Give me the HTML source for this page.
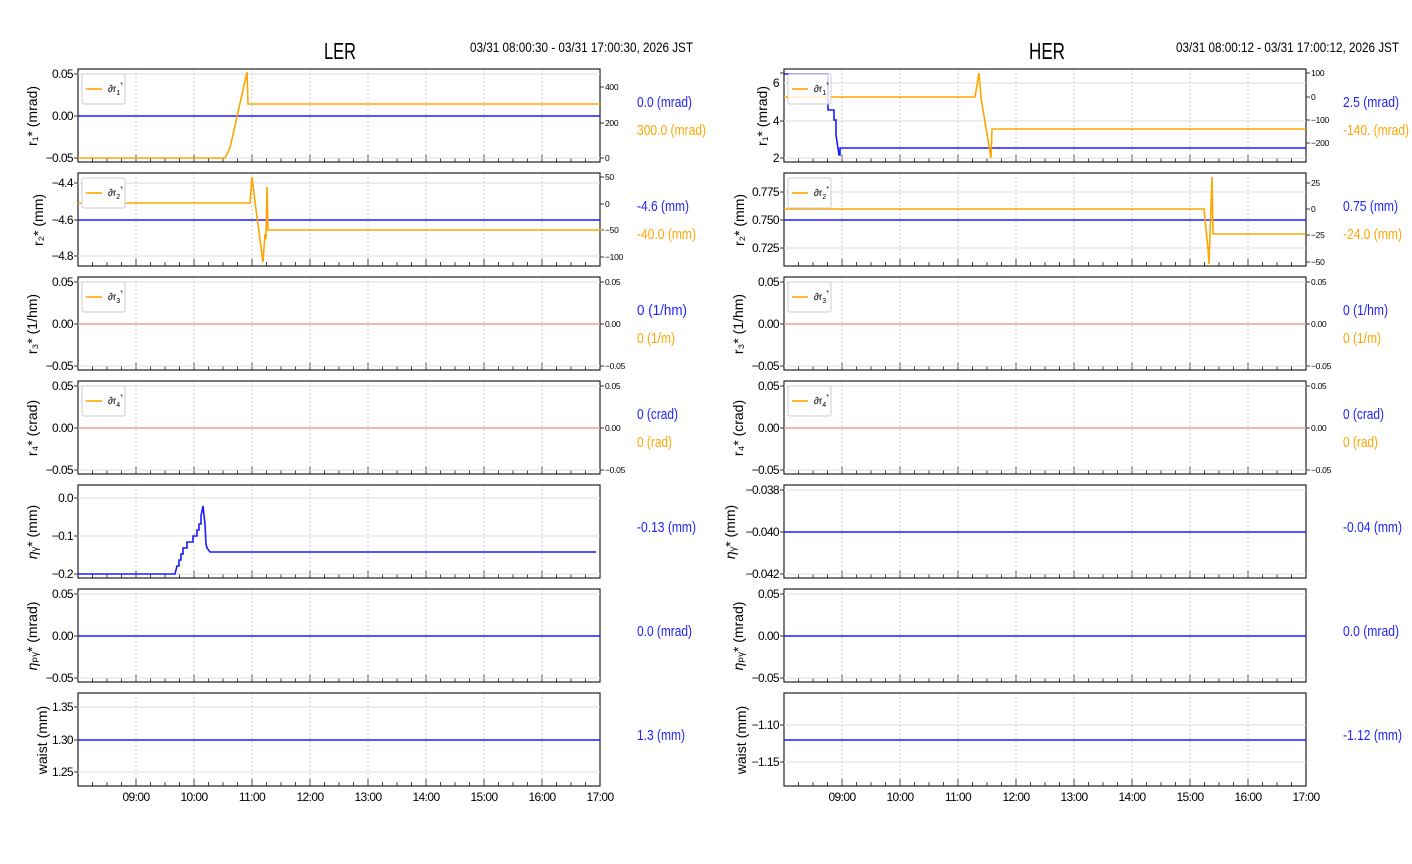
<!DOCTYPE html><html><head><meta charset="utf-8"><style>body{margin:0;background:#fff}svg{display:block}text{font-family:"Liberation Sans",sans-serif}</style></head><body>
<svg width="1412" height="864" viewBox="0 0 1412 864" xmlns="http://www.w3.org/2000/svg">
<defs>
<g id="fr">
<g stroke="#ccc" stroke-dasharray="2,2" stroke-width="1">
<line x1="58" y1="0" x2="58" y2="93"/><line x1="116" y1="0" x2="116" y2="93"/><line x1="174" y1="0" x2="174" y2="93"/><line x1="232" y1="0" x2="232" y2="93"/><line x1="290" y1="0" x2="290" y2="93"/><line x1="348" y1="0" x2="348" y2="93"/><line x1="406" y1="0" x2="406" y2="93"/><line x1="464" y1="0" x2="464" y2="93"/></g>
<path stroke="#444" stroke-width="1" d="M14.5 93v-4M29 93v-4M43.5 93v-4M72.5 93v-4M87 93v-4M101.5 93v-4M130.5 93v-4M145 93v-4M159.5 93v-4M188.5 93v-4M203 93v-4M217.5 93v-4M246.5 93v-4M261 93v-4M275.5 93v-4M304.5 93v-4M319 93v-4M333.5 93v-4M362.5 93v-4M377 93v-4M391.5 93v-4M420.5 93v-4M435 93v-4M449.5 93v-4M478.5 93v-4M493 93v-4M507.5 93v-4M58 93v-7M116 93v-7M174 93v-7M232 93v-7M290 93v-7M348 93v-7M406 93v-7M464 93v-7"/>
<rect x="0" y="0" width="522" height="93" fill="none" stroke="#222" stroke-width="1.2"/>
</g>
</defs>
<text x="340" y="59" font-size="23" text-anchor="middle" textLength="32" lengthAdjust="spacingAndGlyphs">LER</text>
<text x="470" y="52" font-size="14" textLength="223" lengthAdjust="spacingAndGlyphs">03/31 08:00:30 - 03/31 17:00:30, 2026 JST</text>
<text x="1047" y="59" font-size="23" text-anchor="middle" textLength="36" lengthAdjust="spacingAndGlyphs">HER</text>
<text x="1176" y="52" font-size="14" textLength="223" lengthAdjust="spacingAndGlyphs">03/31 08:00:12 - 03/31 17:00:12, 2026 JST</text>

<g font-size="12" letter-spacing="-0.6">
<use href="#fr" x="78" y="69"/><use href="#fr" x="78" y="173"/><use href="#fr" x="78" y="277"/><use href="#fr" x="78" y="381"/><use href="#fr" x="78" y="485"/><use href="#fr" x="78" y="589"/><use href="#fr" x="78" y="693"/>
<use href="#fr" x="784" y="69"/><use href="#fr" x="784" y="173"/><use href="#fr" x="784" y="277"/><use href="#fr" x="784" y="381"/><use href="#fr" x="784" y="485"/><use href="#fr" x="784" y="589"/><use href="#fr" x="784" y="693"/>

<g stroke="#ddd" stroke-width="1">
<path d="M78 74h522M78 158h522M78 183h522M78 256h522M78 282h522M78 366h522M78 386h522M78 470h522M78 498h522M78 536h522M78 574h522M78 594h522M78 678h522M78 707h522M78 772h522"/>
<path d="M784 83h522M784 121h522M784 158h522M784 192h522M784 248h522M784 282h522M784 366h522M784 386h522M784 470h522M784 490h522M784 574h522M784 594h522M784 678h522M784 725h522M784 762h522"/>
</g>
<path stroke="#333" d="M74 74h4M74 116h4M74 158h4M74 183h4M74 220h4M74 256h4M74 282h4M74 324h4M74 366h4M74 386h4M74 428h4M74 470h4M74 498h4M74 536h4M74 574h4M74 594h4M74 636h4M74 678h4M74 707h4M74 740h4M74 772h4M780 73h4M780 121h4M780 158h4M780 192h4M780 220h4M780 248h4M780 282h4M780 324h4M780 366h4M780 386h4M780 428h4M780 470h4M780 490h4M780 532h4M780 574h4M780 594h4M780 636h4M780 678h4M780 725h4M780 762h4M600 87h4M600 123h4M600 158h4M600 177h4M600 204h4M600 230h4M600 257h4M600 282h4M600 324h4M600 366h4M600 386h4M600 428h4M600 470h4M1306 73h4M1306 97h4M1306 120h4M1306 143h4M1306 183h4M1306 209h4M1306 235h4M1306 262h4M1306 282h4M1306 324h4M1306 366h4M1306 386h4M1306 428h4M1306 470h4"/>

<g text-anchor="end">
<text x="73" y="78">0.05</text><text x="73" y="120">0.00</text><text x="73" y="162">−0.05</text>
<text x="73" y="187">−4.4</text><text x="73" y="224">−4.6</text><text x="73" y="260">−4.8</text>
<text x="73" y="286">0.05</text><text x="73" y="328">0.00</text><text x="73" y="370">−0.05</text>
<text x="73" y="390">0.05</text><text x="73" y="432">0.00</text><text x="73" y="474">−0.05</text>
<text x="73" y="502">0.0</text><text x="73" y="540">−0.1</text><text x="73" y="578">−0.2</text>
<text x="73" y="598">0.05</text><text x="73" y="640">0.00</text><text x="73" y="682">−0.05</text>
<text x="73" y="711">1.35</text><text x="73" y="744">1.30</text><text x="73" y="776">1.25</text>
<text x="779" y="87">6</text><text x="779" y="125">4</text><text x="779" y="162">2</text>
<text x="779" y="196">0.775</text><text x="779" y="224">0.750</text><text x="779" y="252">0.725</text>
<text x="779" y="286">0.05</text><text x="779" y="328">0.00</text><text x="779" y="370">−0.05</text>
<text x="779" y="390">0.05</text><text x="779" y="432">0.00</text><text x="779" y="474">−0.05</text>
<text x="779" y="494">−0.038</text><text x="779" y="536">−0.040</text><text x="779" y="578">−0.042</text>
<text x="779" y="598">0.05</text><text x="779" y="640">0.00</text><text x="779" y="682">−0.05</text>
<text x="779" y="729">−1.10</text><text x="779" y="766">−1.15</text>
</g>
<g font-size="8.5" letter-spacing="-0.3">
<text x="605" y="90">400</text><text x="605" y="126">200</text><text x="605" y="161">0</text>
<text x="605" y="180">50</text><text x="605" y="207">0</text><text x="605" y="233">−50</text><text x="605" y="260">−100</text>
<text x="605" y="285">0.05</text><text x="605" y="327">0.00</text><text x="605" y="369">−0.05</text>
<text x="605" y="389">0.05</text><text x="605" y="431">0.00</text><text x="605" y="473">−0.05</text>
<text x="1311" y="76">100</text><text x="1311" y="100">0</text><text x="1311" y="123">−100</text><text x="1311" y="146">−200</text>
<text x="1311" y="186">25</text><text x="1311" y="212">0</text><text x="1311" y="238">−25</text><text x="1311" y="265">−50</text>
<text x="1311" y="285">0.05</text><text x="1311" y="327">0.00</text><text x="1311" y="369">−0.05</text>
<text x="1311" y="389">0.05</text><text x="1311" y="431">0.00</text><text x="1311" y="473">−0.05</text>
</g>
<g text-anchor="middle">
<text x="136" y="801">09:00</text><text x="194" y="801">10:00</text><text x="252" y="801">11:00</text><text x="310" y="801">12:00</text><text x="368" y="801">13:00</text><text x="426" y="801">14:00</text><text x="484" y="801">15:00</text><text x="542" y="801">16:00</text><text x="600" y="801">17:00</text>
<text x="842" y="801">09:00</text><text x="900" y="801">10:00</text><text x="958" y="801">11:00</text><text x="1016" y="801">12:00</text><text x="1074" y="801">13:00</text><text x="1132" y="801">14:00</text><text x="1190" y="801">15:00</text><text x="1248" y="801">16:00</text><text x="1306" y="801">17:00</text>
</g>
</g>

<g font-size="14" font-family="'DejaVu Sans',sans-serif" text-anchor="middle">
<text transform="translate(37,116) rotate(-90)">r₁* (mrad)</text>
<text transform="translate(43,220) rotate(-90)">r₂* (mm)</text>
<text transform="translate(37,324) rotate(-90)">r₃* (1/hm)</text>
<text transform="translate(37,428) rotate(-90)">r₄* (crad)</text>
<text transform="translate(37,532) rotate(-90)"><tspan font-style="italic">η</tspan>ᵧ* (mm)</text>
<text transform="translate(37,636) rotate(-90)"><tspan font-style="italic">η</tspan>ₚᵧ* (mrad)</text>
<text transform="translate(47,740) rotate(-90)">waist (mm)</text>
<text transform="translate(767,116) rotate(-90)">r₁* (mrad)</text>
<text transform="translate(744,220) rotate(-90)">r₂* (mm)</text>
<text transform="translate(743,324) rotate(-90)">r₃* (1/hm)</text>
<text transform="translate(743,428) rotate(-90)">r₄* (crad)</text>
<text transform="translate(735,532) rotate(-90)"><tspan font-style="italic">η</tspan>ᵧ* (mm)</text>
<text transform="translate(743,636) rotate(-90)"><tspan font-style="italic">η</tspan>ₚᵧ* (mrad)</text>
<text transform="translate(746,740) rotate(-90)">waist (mm)</text>
</g>

<g fill="none" stroke-width="1.6">
<path d="M78 324h522M78 428h522M784 324h522M784 428h522" stroke="#e8a090"/>
<g stroke="#1a1aff">
<path d="M78 116h522M78 220h522M78 636h522M78 740h522"/>
<path d="M78 574h97l2-8h2v-6h2v-6h2v-6h4v-6h6v-6h4v-6h2v-6h2v-8l2-10 2 18 1 20 1 4 3 4h386"/>
<path d="M784 74h44v36h6v10h2v15l3 20h1v-7h466M784 220h522M784 532h522M784 636h522M784 740h522"/>
</g>
<g stroke="#ffa500">
<path d="M78 158h147l3-6 2-4 17-76 1 32h353"/>
<path d="M78 203h172l2-26 3 25 8 60 2-28 1 5 1-52 1 43h334"/>
<path d="M784 97h191l4-24 2 25 10 60 1-29h314"/>
<path d="M784 209h420l4 40 1 15 1-30 2-57 1 57h93"/>
</g>
</g>
<g font-size="10">
<rect x="82" y="74" width="43" height="30" fill="#fff" stroke="#ccc" rx="2"/><path d="M86 89h16" stroke="#ffa500" stroke-width="1.6"/><text x="108" y="92">∂r<tspan font-size="7" dy="3">1</tspan><tspan font-size="7" dy="-8">*</tspan></text>
<rect x="82" y="178" width="43" height="30" fill="#fff" stroke="#ccc" rx="2"/><path d="M86 193h16" stroke="#ffa500" stroke-width="1.6"/><text x="108" y="196">∂r<tspan font-size="7" dy="3">2</tspan><tspan font-size="7" dy="-8">*</tspan></text>
<rect x="82" y="282" width="43" height="30" fill="#fff" stroke="#ccc" rx="2"/><path d="M86 297h16" stroke="#ffa500" stroke-width="1.6"/><text x="108" y="300">∂r<tspan font-size="7" dy="3">3</tspan><tspan font-size="7" dy="-8">*</tspan></text>
<rect x="82" y="386" width="43" height="30" fill="#fff" stroke="#ccc" rx="2"/><path d="M86 401h16" stroke="#ffa500" stroke-width="1.6"/><text x="108" y="404">∂r<tspan font-size="7" dy="3">4</tspan><tspan font-size="7" dy="-8">*</tspan></text>
<rect x="788" y="74" width="43" height="30" fill="#fff" fill-opacity="0.8" stroke="#ccc" rx="2"/><path d="M792 89h16" stroke="#ffa500" stroke-width="1.6"/><text x="814" y="92">∂r<tspan font-size="7" dy="3">1</tspan><tspan font-size="7" dy="-8">*</tspan></text>
<rect x="788" y="178" width="43" height="30" fill="#fff" fill-opacity="0.8" stroke="#ccc" rx="2"/><path d="M792 193h16" stroke="#ffa500" stroke-width="1.6"/><text x="814" y="196">∂r<tspan font-size="7" dy="3">2</tspan><tspan font-size="7" dy="-8">*</tspan></text>
<rect x="788" y="282" width="43" height="30" fill="#fff" stroke="#ccc" rx="2"/><path d="M792 297h16" stroke="#ffa500" stroke-width="1.6"/><text x="814" y="300">∂r<tspan font-size="7" dy="3">3</tspan><tspan font-size="7" dy="-8">*</tspan></text>
<rect x="788" y="386" width="43" height="30" fill="#fff" stroke="#ccc" rx="2"/><path d="M792 401h16" stroke="#ffa500" stroke-width="1.6"/><text x="814" y="404">∂r<tspan font-size="7" dy="3">4</tspan><tspan font-size="7" dy="-8">*</tspan></text>
</g>
<g font-size="14.5" lengthAdjust="spacingAndGlyphs">
<g fill="#2222ff">
<text x="637" y="107" textLength="55" lengthAdjust="spacingAndGlyphs">0.0 (mrad)</text><text x="637" y="211" textLength="52" lengthAdjust="spacingAndGlyphs">-4.6 (mm)</text><text x="637" y="315" textLength="50" lengthAdjust="spacingAndGlyphs">0 (1/hm)</text><text x="637" y="419" textLength="41" lengthAdjust="spacingAndGlyphs">0 (crad)</text><text x="637" y="532" textLength="59" lengthAdjust="spacingAndGlyphs">-0.13 (mm)</text><text x="637" y="636" textLength="55" lengthAdjust="spacingAndGlyphs">0.0 (mrad)</text><text x="637" y="740" textLength="48" lengthAdjust="spacingAndGlyphs">1.3 (mm)</text>
<text x="1343" y="107" textLength="56" lengthAdjust="spacingAndGlyphs">2.5 (mrad)</text><text x="1343" y="211" textLength="55" lengthAdjust="spacingAndGlyphs">0.75 (mm)</text><text x="1343" y="315" textLength="45" lengthAdjust="spacingAndGlyphs">0 (1/hm)</text><text x="1343" y="419" textLength="41" lengthAdjust="spacingAndGlyphs">0 (crad)</text><text x="1343" y="532" textLength="59" lengthAdjust="spacingAndGlyphs">-0.04 (mm)</text><text x="1343" y="636" textLength="56" lengthAdjust="spacingAndGlyphs">0.0 (mrad)</text><text x="1343" y="740" textLength="59" lengthAdjust="spacingAndGlyphs">-1.12 (mm)</text>
</g>
<g fill="#ffa500">
<text x="637" y="135" textLength="69" lengthAdjust="spacingAndGlyphs">300.0 (mrad)</text><text x="637" y="239" textLength="59" lengthAdjust="spacingAndGlyphs">-40.0 (mm)</text><text x="637" y="343" textLength="38" lengthAdjust="spacingAndGlyphs">0 (1/m)</text><text x="637" y="447" textLength="35" lengthAdjust="spacingAndGlyphs">0 (rad)</text>
<text x="1343" y="135" textLength="66" lengthAdjust="spacingAndGlyphs">-140. (mrad)</text><text x="1343" y="239" textLength="59" lengthAdjust="spacingAndGlyphs">-24.0 (mm)</text><text x="1343" y="343" textLength="38" lengthAdjust="spacingAndGlyphs">0 (1/m)</text><text x="1343" y="447" textLength="35" lengthAdjust="spacingAndGlyphs">0 (rad)</text>
</g>
</g>
</svg>
</body></html>
